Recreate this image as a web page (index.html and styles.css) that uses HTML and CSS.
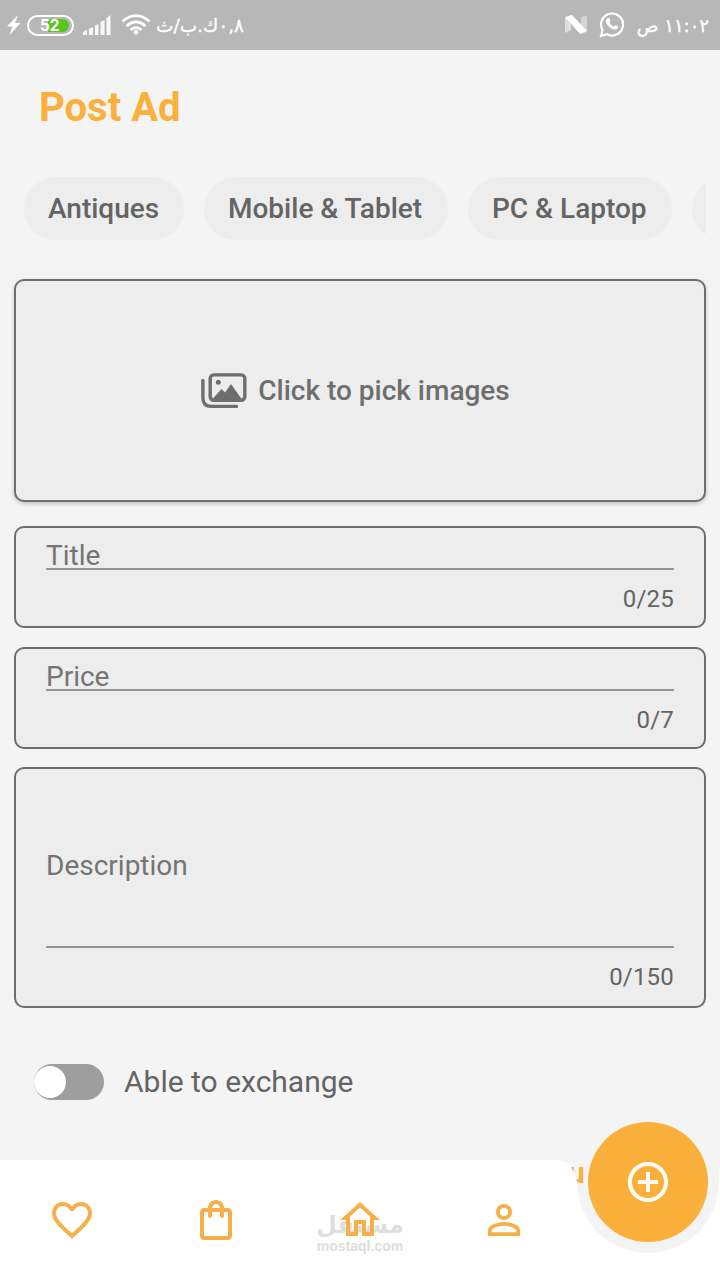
FILE: index.html
```html
<!DOCTYPE html>
<html lang="en">
<head>
<meta charset="utf-8">
<title>Post Ad</title>
<link rel="stylesheet" href="styles.css">
</head>
<body>
<div class="screen">
  <header class="status">
    <div class="status-left">
      <svg class="bolt" width="14" height="22" viewBox="0 0 14 22"><path d="M11 1 0 12.500h5.500L2.500 21 13.500 9H8z" fill="#fff"/></svg>
      <div class="battery"><span class="battery-fill"></span><span class="battery-text">52</span></div>
      <svg class="signal" width="28" height="20" viewBox="0 0 28 20" fill="#f7f7f7"><path d="M0 17l4-2v5H0zM6 14l4-2v8H6zM12 10.500l3.500-1.500v11H12zM17.500 7l4-2v15h-4zM23.500 3l4-3v20h-4z"/></svg>
      <svg class="wifi" width="30" height="22" viewBox="0 0 30 22" fill="none" stroke="#fff" stroke-width="2.800"><path d="M1.500 7.500Q15-4.200 28.500 7.500M5.500 12Q15 3.800 24.500 12M9.500 16Q15 11.200 20.500 16"/><circle cx="15" cy="18.300" r="2.300" fill="#fff" stroke="none"/></svg>
      <span class="rate" dir="rtl">٠,٨ك.ب/ث</span>
    </div>
    <div class="status-right">
      <svg width="22" height="20" viewBox="0 0 22 20"><path d="M0 3 6 0v15L0 18z" fill="#dedede"/><path d="M16 2l6-1v16l-6 2z" fill="#d5d5d5"/><path d="M0 2 7 0l15 16-7 3z" fill="#fff"/></svg>
      <svg class="phone" width="26" height="28" viewBox="0 0 26 28" fill="none"><path d="M2 25l1.500-6A11 11 0 1 1 8 23.300z" stroke="#fff" stroke-width="2.200"/><path d="M8.200 7.500c1-1 2-.8 2.400.2l.8 2c.3.700-1 1.500-.8 2 .9 1.800 2.200 3 4 3.800.7.200 1.300-1.500 2-1.200l2.200 1c.8.500.2 2-.7 2.700-1.200.9-2.800.7-4.500-.1-3-1.300-5-3.300-6.200-6-.8-1.700-.4-3.200.8-4.400z" fill="#fff"/></svg>
      <span class="clock" dir="rtl">١١:٠٢ ص</span>
    </div>
  </header>

  <main class="content">
    <h1 class="title">Post Ad</h1>
    <div class="chips">
      <span class="chip">Antiques</span>
      <span class="chip chip-wide">Mobile &amp; Tablet</span>
      <span class="chip chip-mid">PC &amp; Laptop</span>
      <span class="chip"></span>
    </div>

    <button class="box picker">
      <svg width="46" height="36" viewBox="0 0 46 36" fill="none" stroke="#6e6e6e" stroke-width="3.400"><rect x="9.200" y="1.900" width="34.600" height="25.400" rx="3.500"/><path d="M1.900 7.500V25q0 8.400 8.400 8.400H35.500" stroke-linecap="round"/><circle cx="17.300" cy="9.300" r="2.500" fill="#6e6e6e" stroke="none"/><path d="M11 26.500 20.500 16l3.500 3.500 6-8.500L41 26.500z" fill="#6e6e6e" stroke="none"/></svg>
      <span>Click to pick images</span>
    </button>

    <div class="box field">
      <div class="label">Title</div>
      <div class="counter">0/25</div>
    </div>
    <div class="box field">
      <div class="label">Price</div>
      <div class="counter">0/7</div>
    </div>
    <div class="box field description">
      <div class="label">Description</div>
      <div class="counter">0/150</div>
    </div>

    <div class="exchange">
      <span class="toggle"><span class="knob"></span></span>
      <span>Able to exchange</span>
    </div>
  </main>

  <span class="continue">u</span>

  <nav class="nav">
    <svg class="nav-shape" width="720" height="120" viewBox="0 0 720 120" fill="#fff"><path d="M0 0H554C570 0 573 8 577 22A71 71 0 0 0 719 22Q719 10 720 6V120H0z"/></svg>
    <div class="watermark"><span class="wm-ar" dir="rtl">مستقل</span><span class="wm-en">mostaql.com</span></div>
    <div class="nav-items">
      <svg class="icon" viewBox="0 0 24 24"><path d="M16.500 3c-1.740 0-3.410.81-4.500 2.090C10.910 3.810 9.240 3 7.500 3 4.420 3 2 5.420 2 8.500c0 3.780 3.400 6.860 8.550 11.540L12 21.350l1.450-1.320C18.600 15.360 22 12.280 22 8.500 22 5.420 19.580 3 16.500 3zm-4.400 15.550l-.1.100-.1-.1C7.140 14.240 4 11.390 4 8.500 4 6.500 5.500 5 7.500 5c1.540 0 3.040.99 3.570 2.360h1.870C13.460 5.990 14.960 5 16.500 5c2 0 3.500 1.500 3.500 3.500 0 2.890-3.140 5.740-7.900 10.050z"/></svg>
      <svg class="icon" viewBox="0 0 24 24"><path d="M18 6h-2c0-2.210-1.790-4-4-4S8 3.790 8 6H6c-1.100 0-2 .9-2 2v12c0 1.100.9 2 2 2h12c1.100 0 2-.9 2-2V8c0-1.100-.9-2-2-2zm-6-2c1.100 0 2 .9 2 2h-4c0-1.100.9-2 2-2zm6 16H6V8h2v2c0 .55.450 1 1 1s1-.45 1-1V8h4v2c0 .55.450 1 1 1s1-.45 1-1V8h2v12z"/></svg>
      <svg class="icon" viewBox="0 0 24 24"><path d="M12 5.690l5 4.500V18h-2v-6H9v6H7v-7.810l5-4.500M12 3 2 12h3v8h6v-6h2v6h6v-8h3L12 3z"/></svg>
      <svg class="icon" viewBox="0 0 24 24"><path d="M12 5.900a2.100 2.100 0 1 1 0 4.200 2.100 2.100 0 0 1 0-4.200m0 9c2.970 0 6.100 1.460 6.100 2.100v1.100H5.900V17c0-.64 3.130-2.100 6.100-2.100M12 4C9.790 4 8 5.790 8 8s1.790 4 4 4 4-1.790 4-4-1.790-4-4-4zm0 9c-2.670 0-8 1.340-8 4v3h16v-3c0-2.660-5.330-4-8-4z"/></svg>
    </div>
  </nav>
  <button class="fab"><svg width="48" height="48" viewBox="0 0 24 24" fill="#fffdf5"><path d="M13 7h-2v4H7v2h4v4h2v-4h4v-2h-4V7zm-1-5C6.480 2 2 6.480 2 12s4.480 10 10 10 10-4.480 10-10S17.520 2 12 2zm0 18c-4.410 0-8-3.590-8-8s3.590-8 8-8 8 3.590 8 8-3.590 8-8 8z"/></svg></button>
</div>
</body>
</html>
```
FILE: styles.css
```css
* { box-sizing: border-box; }
body { margin: 0; font-family: Roboto, sans-serif; }
.screen { position: relative; width: 720px; height: 1280px; overflow: hidden; background: #f4f4f4; color: #646464; }
.status { display: flex; justify-content: space-between; height: 50px; padding: 0 11px 0 7px; background: #b7b7b7; color: #fff; font-family: "DejaVu Sans", sans-serif; }
.status-left, .status-right { display: flex; align-items: center; }
.bolt { margin-right: 6px; }
.battery { position: relative; width: 47px; height: 21px; border: 2px solid #fff; border-radius: 11px; overflow: hidden; }
.battery-fill { position: absolute; left: 19px; top: 2px; bottom: 2px; width: 21px; border-radius: 0 8px 8px 0; background: #56c51c; }
.battery-text { position: absolute; left: 11px; top: 0; font: bold 17px/17px Roboto, sans-serif; }
.signal { margin-left: 9px; }
.wifi { margin-left: 10px; }
.rate { margin-left: 5px; width: 88px; font-size: 18.500px; white-space: nowrap; -webkit-text-stroke: .3px #fff; }
.status-right { gap: 12px; }
.clock { width: 72px; font-size: 18px; white-space: nowrap; -webkit-text-stroke: .3px #fff; }
.content { padding: 0 14px; }
.title { margin: 34px 0 0 25px; font-size: 40px; line-height: 47px; font-weight: 700; color: #fbb03b; }
.chips { display: flex; gap: 20px; margin-top: 46px; padding-left: 10px; overflow: hidden; }
.chip { flex: none; width: 160px; height: 63px; padding: 0 24px; border-radius: 32px; background: #ededed; font-size: 28px; line-height: 63px; font-weight: 500; white-space: nowrap; }
.chip-wide { width: 244px; }
.chip-mid { width: 204px; }
.box { width: 692px; background: #ededed; border: 2px solid #6e6e6e; border-radius: 10px; }
.picker { display: flex; align-items: center; justify-content: center; gap: 11px; height: 223px; margin-top: 39px; padding: 0 9px 0 0; box-shadow: 0 2px 4px rgba(0,0,0,.2); font: 500 28px Roboto, sans-serif; color: #6e6e6e; }
.field { height: 102px; margin-top: 19px; padding: 11px 30px 0; }
.picker + .field { margin-top: 24px; }
.label { height: 31px; border-bottom: 2px solid #949494; font-size: 28px; line-height: 33px; color: #747474; }
.counter { margin-top: 14px; font-size: 24px; line-height: 30px; letter-spacing: .2px; text-align: right; }
.description { height: 241px; margin-top: 18px; padding-top: 80px; }
.description .label { height: 99px; line-height: 34px; }
.exchange { display: flex; align-items: center; gap: 20px; margin: 56px 0 0 20px; font-size: 30px; line-height: 36px; }
.toggle { display: flex; align-items: center; width: 70px; height: 36px; border-radius: 18px; background: #9e9e9e; }
.knob { width: 32px; height: 32px; border-radius: 50%; background: #fff; }
.continue { position: absolute; left: 568px; top: 1155px; font-size: 30px; line-height: 35px; font-weight: 700; color: #fbb03b; }
.nav { position: absolute; left: 0; top: 1160px; width: 720px; height: 120px; }
.nav-shape { position: absolute; inset: 0; }
.nav-items { position: relative; display: grid; grid-template-columns: repeat(5, 144px); justify-items: center; align-items: center; height: 120px; }
.icon { width: 48px; height: 48px; fill: #f5b04a; }
.watermark { position: absolute; left: 310px; top: 51px; width: 100px; display: flex; flex-direction: column; align-items: center; color: #dedede; }
.wm-ar { font: bold 24px/28px "DejaVu Sans", sans-serif; }
.wm-en { font: bold 14px/14px "Liberation Sans", sans-serif; }
.fab { position: absolute; left: 588px; top: 1122px; width: 120px; height: 120px; padding: 0; display: grid; place-items: center; border: 0; border-radius: 50%; background: #fbb03b; }
```
